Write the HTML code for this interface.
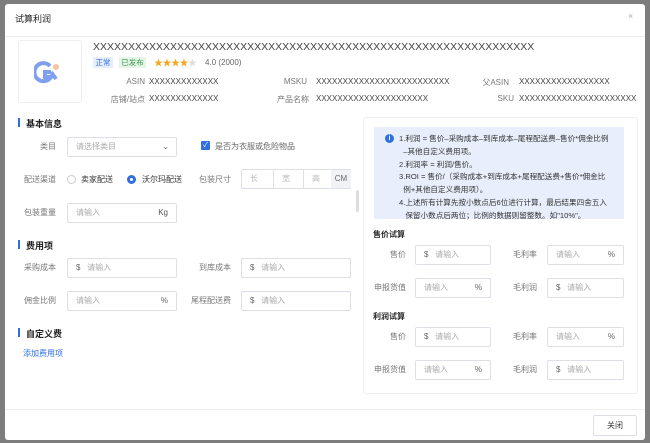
<!DOCTYPE html>
<html><head><meta charset="utf-8"><style>
*{box-sizing:border-box;margin:0;padding:0}
body{width:650px;height:443px;overflow:hidden;background:#7d7d7d;font-family:"Liberation Sans","Noto Sans CJK SC",sans-serif;font-size:8px;color:#333;position:relative}
.a{position:absolute;white-space:nowrap}
.dlg{position:absolute;left:5px;top:4px;width:640px;height:436px;background:#fff;border-radius:3px}
.in{position:absolute;border:1px solid #dcdfe6;border-radius:2px;background:#fff;height:20px;color:#aaa;font-size:8px;line-height:18px}
.lbl{position:absolute;color:#777;font-size:8px;text-align:right;white-space:nowrap}
.sec{position:absolute;font-size:9px;color:#222;font-weight:bold}
.sec:before{content:"";position:absolute;left:-8px;top:1px;width:2px;height:9px;background:#2f6fe0}
.x{color:#444;font-size:8px}
.g{color:#999}
</style></head><body>
<div class="dlg"></div>
<div class="a" style="left:15px;top:12px;font-size:9px;color:#222">试算利润</div>
<div class="a" style="left:628px;top:11px;color:#aaa;font-size:9px">×</div>
<div class="a" style="left:5px;top:36px;width:640px;height:1px;background:#eee"></div>

<div class="a" style="left:18px;top:40px;width:64px;height:63px;border:1px solid #eee;border-radius:3px"></div>
<svg class="a" style="left:34px;top:60px" width="30" height="24" viewBox="0 0 30 24"><path d="M16 6 A9 9 0 1 0 17 17 L11 17 L11 12 L17 12" fill="none" stroke="#7f9ff0" stroke-width="4"/><path d="M17 12 L22 19" stroke="#7f9ff0" stroke-width="4"/><circle cx="22" cy="7" r="3" fill="#f3c49e"/></svg>
<div class="a x" style="left:93px;top:41px;font-size:10.5px">XXXXXXXXXXXXXXXXXXXXXXXXXXXXXXXXXXXXXXXXXXXXXXXXXXXXXXXXXXXXXXX</div>
<div class="a" style="left:93px;top:57px;width:20px;height:11px;background:#e6eefc;color:#2f6fe0;text-align:center;line-height:11px;font-size:7.5px">正常</div>
<div class="a" style="left:119px;top:57px;width:27px;height:11px;background:#e5f5e8;color:#3a9a4a;text-align:center;line-height:11px;font-size:7.5px">已发布</div>
<div class="a" style="left:154px;top:56px;color:#f5a623;font-size:9px;letter-spacing:-0.5px">★★★★<span style="color:#ddd">★</span></div>
<div class="a g" style="left:205px;top:58px;color:#666">4.0 (2000)</div>
<div class="lbl" style="right:505px;top:77px">ASIN</div><div class="a x" style="left:149px;top:77px">XXXXXXXXXXXXX</div>
<div class="lbl" style="right:343px;top:77px">MSKU</div><div class="a x" style="left:316px;top:77px">XXXXXXXXXXXXXXXXXXXXXXXXX</div>
<div class="lbl" style="right:141px;top:77px">父ASIN</div><div class="a x" style="left:519px;top:77px">XXXXXXXXXXXXXXXXX</div>
<div class="lbl" style="right:505px;top:94px">店铺/站点</div><div class="a x" style="left:149px;top:94px">XXXXXXXXXXXXX</div>
<div class="lbl" style="right:341px;top:94px">产品名称</div><div class="a x" style="left:316px;top:94px">XXXXXXXXXXXXXXXXXXXXX</div>
<div class="lbl" style="right:136px;top:94px">SKU</div><div class="a x" style="left:519px;top:94px">XXXXXXXXXXXXXXXXXXXXXX</div>

<div class="sec" style="left:26px;top:117px">基本信息</div>
<div class="lbl" style="right:594px;top:141px">类目</div>
<div class="in" style="left:67px;top:137px;width:110px;padding-left:8px">请选择类目<span style="position:absolute;right:7px;color:#666">⌄</span></div>
<div class="a" style="left:201px;top:141px;width:9px;height:9px;background:#2f6fe0;border-radius:1px;color:#fff;font-size:7px;line-height:9px;text-align:center">✓</div>
<div class="a" style="left:215px;top:141px;color:#666">是否为衣服或危险物品</div>
<div class="lbl" style="right:594px;top:174px">配送渠道</div>
<div class="a" style="left:67px;top:175px;width:9px;height:9px;border:1px solid #ccc;border-radius:50%"></div>
<div class="a" style="left:81px;top:174px;color:#333">卖家配送</div>
<div class="a" style="left:127px;top:175px;width:9px;height:9px;border:3px solid #2f6fe0;border-radius:50%"></div>
<div class="a" style="left:142px;top:174px;color:#333">沃尔玛配送</div>
<div class="lbl" style="right:419px;top:174px">包装尺寸</div>
<div class="in" style="left:241px;top:169px;width:110px;color:#bbb">
<span style="position:absolute;left:8px">长</span><span style="position:absolute;left:31px;top:0;height:18px;border-left:1px solid #dcdfe6;padding-left:8px">宽</span><span style="position:absolute;left:61px;top:0;height:18px;border-left:1px solid #dcdfe6;padding-left:8px">高</span><span style="position:absolute;left:89px;top:0;width:20px;height:18px;background:#f0f2f5;color:#666;text-align:center">CM</span></div>
<div class="lbl" style="right:594px;top:207px">包装重量</div>
<div class="in" style="left:67px;top:203px;width:110px;padding-left:8px">请输入<span style="position:absolute;right:8px;color:#555">Kg</span></div>
<div class="a" style="left:356px;top:190px;width:3px;height:22px;background:#ddd;border-radius:2px"></div>

<div class="sec" style="left:26px;top:239px">费用项</div>
<div class="lbl" style="right:594px;top:262px">采购成本</div>
<div class="in" style="left:67px;top:258px;width:110px;padding-left:8px"><span style="color:#666">$</span>&nbsp;&nbsp;&nbsp;请输入</div>
<div class="lbl" style="right:419px;top:262px">到库成本</div>
<div class="in" style="left:241px;top:258px;width:110px;padding-left:8px"><span style="color:#666">$</span>&nbsp;&nbsp;&nbsp;请输入</div>
<div class="lbl" style="right:594px;top:295px">佣金比例</div>
<div class="in" style="left:67px;top:291px;width:110px;padding-left:8px">请输入<span style="position:absolute;right:8px;color:#666">%</span></div>
<div class="lbl" style="right:419px;top:295px">尾程配送费</div>
<div class="in" style="left:241px;top:291px;width:110px;padding-left:8px"><span style="color:#666">$</span>&nbsp;&nbsp;&nbsp;请输入</div>
<div class="sec" style="left:26px;top:327px">自定义费</div>
<div class="a" style="left:23px;top:348px;color:#2f6fe0">添加费用项</div>

<div class="a" style="left:363px;top:117px;width:275px;height:277px;border:1px solid #eee;border-radius:3px"></div>
<div class="a" style="left:374px;top:127px;width:250px;height:92px;background:#e8eefb"></div>
<div class="a" style="left:385px;top:134px;width:9px;height:9px;border-radius:50%;background:#2f6fe0;color:#fff;font-size:7px;line-height:9px;text-align:center;font-weight:bold">i</div>
<div class="a" style="left:399px;top:133px;color:#333;font-size:7.6px;line-height:12.8px;white-space:normal;width:225px">1.利润 = 售价–采购成本–到库成本–尾程配送费–售价*佣金比例<br>&nbsp;&nbsp;–其他自定义费用项。<br>2.利润率 = 利润/售价。<br>3.ROI = 售价/（采购成本+到库成本+尾程配送费+售价*佣金比<br>&nbsp;&nbsp;例+其他自定义费用项）。<br>4.上述所有计算先按小数点后6位进行计算，最后结果四舍五入<br>&nbsp;&nbsp;&nbsp;保留小数点后两位；比例的数据则留整数。如"10%"。</div>

<div class="a" style="left:373px;top:229px;font-weight:bold;color:#222">售价试算</div>
<div class="lbl" style="right:244px;top:249px">售价</div>
<div class="in" style="left:415px;top:245px;width:76px;padding-left:8px"><span style="color:#666">$</span>&nbsp;&nbsp;&nbsp;请输入</div>
<div class="lbl" style="right:113px;top:249px">毛利率</div>
<div class="in" style="left:547px;top:245px;width:77px;padding-left:8px">请输入<span style="position:absolute;right:8px;color:#666">%</span></div>
<div class="lbl" style="right:244px;top:282px">申报货值</div>
<div class="in" style="left:415px;top:278px;width:76px;padding-left:8px">请输入<span style="position:absolute;right:8px;color:#666">%</span></div>
<div class="lbl" style="right:113px;top:282px">毛利润</div>
<div class="in" style="left:547px;top:278px;width:77px;padding-left:8px"><span style="color:#666">$</span>&nbsp;&nbsp;&nbsp;请输入</div>

<div class="a" style="left:373px;top:311px;font-weight:bold;color:#222">利润试算</div>
<div class="lbl" style="right:244px;top:331px">售价</div>
<div class="in" style="left:415px;top:327px;width:76px;padding-left:8px"><span style="color:#666">$</span>&nbsp;&nbsp;&nbsp;请输入</div>
<div class="lbl" style="right:113px;top:331px">毛利率</div>
<div class="in" style="left:547px;top:327px;width:77px;padding-left:8px">请输入<span style="position:absolute;right:8px;color:#666">%</span></div>
<div class="lbl" style="right:244px;top:364px">申报货值</div>
<div class="in" style="left:415px;top:360px;width:76px;padding-left:8px">请输入<span style="position:absolute;right:8px;color:#666">%</span></div>
<div class="lbl" style="right:113px;top:364px">毛利润</div>
<div class="in" style="left:547px;top:360px;width:77px;padding-left:8px"><span style="color:#666">$</span>&nbsp;&nbsp;&nbsp;请输入</div>

<div class="a" style="left:5px;top:409px;width:640px;height:1px;background:#eee"></div>
<div class="a" style="left:593px;top:415px;width:44px;height:21px;border:1px solid #dcdfe6;border-radius:2px;text-align:center;line-height:19px;color:#333">关闭</div>
</body></html>
